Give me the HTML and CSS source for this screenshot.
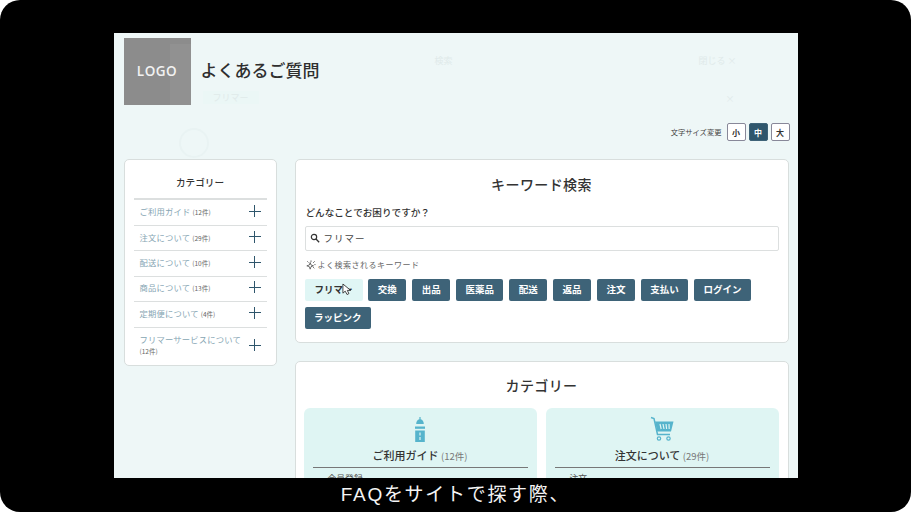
FILE: index.html
```html
<!DOCTYPE html>
<html lang="ja">
<head>
    <meta charset="UTF-8">
    <title>よくあるご質問</title>
    <link rel="stylesheet" href="styles.css">
</head>
<body>
    <div class="frame">
        <div class="screen">
            <div class="ghost">
                <span class="ghost__title">検索</span>
                <span class="ghost__close">閉じる ×</span>
                <span class="ghost__chip">フリマー</span>
                <span class="ghost__x">×</span>
                <span class="ghost__ring"></span>
            </div>

            <header class="header">
                <div class="logo">LOGO</div>
                <h1 class="header__title">よくあるご質問</h1>
            </header>

            <div class="size">
                <span class="size__label">文字サイズ変更</span>
                <button class="size__btn">小</button>
                <button class="size__btn size__btn--on">中</button>
                <button class="size__btn">大</button>
            </div>

            <div class="content">
                <aside class="side">
                    <h2 class="side__title">カテゴリー</h2>
                    <div class="side__item"><span>ご利用ガイド <small>(12件)</small></span><i class="plus"></i></div>
                    <div class="side__item"><span>注文について <small>(29件)</small></span><i class="plus"></i></div>
                    <div class="side__item"><span>配送について <small>(10件)</small></span><i class="plus"></i></div>
                    <div class="side__item"><span>商品について <small>(13件)</small></span><i class="plus"></i></div>
                    <div class="side__item"><span>定期便について <small>(4件)</small></span><i class="plus"></i></div>
                    <div class="side__item side__item--tall"><span>フリマーサービスについて <small>(12件)</small></span><i class="plus"></i></div>
                </aside>

                <main class="main">
                    <section class="card card--search">
                        <h2 class="card__title">キーワード検索</h2>
                        <p class="search__label">どんなことでお困りですか？</p>
                        <div class="search__input">
                            <svg class="search__icon" viewBox="0 0 12 12" width="10" height="10">
                                <circle cx="4.8" cy="4.8" r="3.2" fill="none" stroke="#333" stroke-width="1.4"/>
                                <path d="M7.2 7.2 11 11" stroke="#333" stroke-width="1.6"/>
                            </svg>
                            フリマー
                        </div>
                        <p class="search__hint">
                            <svg viewBox="0 0 12 12" width="10" height="10">
                                <path d="M5 3 6 6 9 7 6 8 5 11 4 8 1 7 4 6Z M1.5 1.5 3 3 M6 .5V2.500 M10.500 1.500 8.500 3.500 M11.500 5.500H10 M10 10 8.500 8.500" fill="none" stroke="#444" stroke-width=".9"/>
                            </svg>
                            よく検索されるキーワード
                        </p>
                        <div class="chips">
                            <span class="chip chip--on">フリマー
                                <svg class="cursor" viewBox="0 0 12 14" width="11" height="13">
                                    <path d="M1 1V11L3.500 8.800 5.500 12.500 7.500 11.500 5.800 8H9.500Z" fill="#fff" stroke="#222" stroke-width=".9"/>
                                </svg>
                            </span>
                            <span class="chip">交換</span>
                            <span class="chip">出品</span>
                            <span class="chip">医薬品</span>
                            <span class="chip">配送</span>
                            <span class="chip">返品</span>
                            <span class="chip">注文</span>
                            <span class="chip">支払い</span>
                            <span class="chip">ログイン</span>
                            <span class="chip">ラッピンク</span>
                        </div>
                    </section>

                    <section class="card card--cats">
                        <h2 class="card__title">カテゴリー</h2>
                        <div class="tiles">
                            <div class="tile">
                                <svg class="tile__icon" viewBox="0 0 24 28" width="24" height="28">
                                    <path d="M11.400 1h1.200v2.200c2.100.5 3.200 2.400 3.200 4.800H8.200c0-2.400 1.100-4.300 3.200-4.800Z" fill="#56b4cc"/>
                                    <path d="M7 10.500h10v2.300H7Z" fill="#56b4cc"/>
                                    <path d="M7.200 14.500h9.600v11.500H7.200Z" fill="#56b4cc"/>
                                    <path d="M11.400 16.500h1.200v3h-1.200ZM11.400 21h1.200v3h-1.200Z" fill="#dff5f3"/>
                                </svg>
                                <h3 class="tile__title">ご利用ガイド <small>(12件)</small></h3>
                                <p class="tile__row">会員登録</p>
                            </div>
                            <div class="tile">
                                <svg class="tile__icon" viewBox="0 0 24 26" width="24" height="26">
                                    <path d="M1 1.500 4 2.500 7.500 18.500H20" fill="none" stroke="#56b4cc" stroke-width="1.500"/>
                                    <path d="M5 5.500H23.500L21 15.500H7.200Z" fill="#56b4cc"/>
                                    <path d="M10 8 11.200 13M13 8 14 13M16 8 16.600 13M19 8 19.200 13" stroke="#dff5f3" stroke-width="1.200"/>
                                    <circle cx="9" cy="22.500" r="1.700" fill="none" stroke="#56b4cc" stroke-width="1.200"/>
                                    <circle cx="18.500" cy="22.500" r="1.700" fill="none" stroke="#56b4cc" stroke-width="1.200"/>
                                </svg>
                                <h3 class="tile__title tile__title--cart">注文について <small>(29件)</small></h3>
                                <p class="tile__row">注文</p>
                            </div>
                        </div>
                    </section>
                </main>
            </div>
        </div>
        <div class="caption">FAQをサイトで探す際、</div>
    </div>
</body>
</html>
```

FILE: styles.css
```css
:root {
    --navy: #3e6378;
    --line: #dcdfdf;
    --tile: #dff5f3;
    --jp: "Noto Sans CJK JP", "Noto Sans", sans-serif;
}

html,
body {
    height: 100%;
}

body {
    margin: 0;
    background: #fff;
    font-family: var(--jp);
    color: #333;
    overflow: hidden;
}

.frame {
    display: flex;
    flex-direction: column;
    align-items: center;
    width: 911px;
    height: 512px;
    padding-top: 33px;
    box-sizing: border-box;
    background: #000;
    border-radius: 20px;
}

.screen {
    position: relative;
    flex: none;
    width: 684px;
    height: 445px;
    overflow: hidden;
    background: #eef7f7;
}

/* faded modal from the video transition */
.ghost {
    position: absolute;
    inset: 0;
    color: #e0eaea;
    font-size: 9px;
}

.ghost span {
    position: absolute;
}

.ghost__title {
    left: 321px;
    top: 21px;
}

.ghost__close {
    left: 585px;
    top: 21px;
}

.ghost__chip {
    left: 89px;
    top: 58px;
    padding: 0 10px;
    background: #ebf7f6;
}

.ghost__x {
    left: 612px;
    top: 59px;
}

.ghost__ring {
    left: 65px;
    top: 95px;
    width: 26px;
    height: 26px;
    border: 2px solid #e9f3f3;
    border-radius: 50%;
}

.header {
    position: relative;
    display: flex;
    align-items: center;
    gap: 10px;
    padding: 5px 10px 0;
}

.logo {
    position: relative;
    width: 67px;
    height: 67px;
    line-height: 67px;
    text-align: center;
    background: #8c8c8c;
    color: #f2f2f2;
    font-family: "Open Sans", sans-serif;
    font-size: 13.500px;
    font-weight: 600;
    letter-spacing: .5px;
}

/* edge of the faded modal showing through the logo */
.logo::after {
    content: '';
    position: absolute;
    top: 6px;
    right: 0;
    bottom: 0;
    width: 21px;
    background: rgba(255, 255, 255, .05);
}

.header__title {
    margin: 0 0 4px;
    font-size: 17px;
    font-weight: 500;
    color: #2f2f2f;
}

.size {
    position: relative;
    display: flex;
    justify-content: flex-end;
    align-items: center;
    gap: 3px;
    margin-top: 18px;
    padding-right: 8px;
}

.size__label {
    margin-right: 2px;
    font-size: 7.300px;
    color: #444;
}

.size__btn {
    width: 19px;
    height: 18px;
    padding: 0;
    border: 1px solid #889;
    border-radius: 2px;
    background: #fff;
    color: #333;
    font-family: var(--jp);
    font-size: 8px;
    font-weight: 700;
}

.size__btn--on {
    border-color: var(--navy);
    background: #2f566c;
    color: #fff;
}

.content {
    position: relative;
    display: grid;
    grid-template-columns: 153px 494px;
    gap: 18px;
    align-items: start;
    margin-top: 18px;
    padding: 0 10px;
}

.side,
.card {
    background: #fff;
    border: 1px solid #d8dedd;
    border-radius: 5px;
    box-sizing: border-box;
}

.side {
    height: 207px;
    padding: 0 9px;
}

.side__title {
    height: 38px;
    margin: 0;
    line-height: 44px;
    text-align: center;
    font-size: 9.600px;
    font-weight: 500;
    color: #333;
}

.side__item {
    display: flex;
    align-items: center;
    justify-content: space-between;
    height: 25.400px;
    padding: 0 6px 3px;
    border-top: 1px solid var(--line);
    box-sizing: border-box;
    font-size: 8.300px;
    letter-spacing: .2px;
    color: #86a5b3;
}

.side__item:first-of-type {
    height: 27px;
    border-top-width: 2px;
}

.side__item--tall {
    height: 38px;
    padding-bottom: 2px;
    line-height: 12px;
}

.side__item--tall small {
    display: block;
}

.side__item small {
    font-size: 6.500px;
    letter-spacing: 0;
    color: #666;
}

.side__item span {
    width: 106px;
}

.plus {
    position: relative;
    flex: none;
    width: 12px;
    height: 12px;
    background:
        linear-gradient(#2f566c, #2f566c) center / 100% 1px no-repeat,
        linear-gradient(#2f566c, #2f566c) center / 1px 100% no-repeat;
}

.main {
    display: flex;
    flex-direction: column;
    gap: 18px;
}

.card--search {
    height: 184px;
    padding: 0 9px;
}

.card__title {
    margin: 0;
    padding-top: 14px;
    line-height: 21px;
    text-align: center;
    font-size: 14px;
    font-weight: 500;
    letter-spacing: .4px;
    color: #333;
}

.card--cats .card__title {
    padding-top: 13px;
}

.search__label {
    margin: 10px 0 0 1px;
    line-height: 14px;
    font-size: 9.600px;
    font-weight: 500;
    color: #333;
}

.search__input {
    display: flex;
    align-items: center;
    gap: 4px;
    height: 25px;
    margin-top: 7px;
    padding: 0 0 1px 4px;
    border: 1px solid var(--line);
    border-radius: 2px;
    box-sizing: border-box;
    font-size: 9.500px;
    letter-spacing: 1px;
    color: #444;
}

.search__hint {
    display: flex;
    align-items: center;
    gap: 2px;
    margin: 7px 0 0 1px;
    line-height: 13px;
    font-size: 8px;
    letter-spacing: .5px;
    color: #666;
}

.chips {
    display: flex;
    flex-wrap: wrap;
    gap: 6px 5.800px;
    margin-top: 8px;
}

.chip {
    position: relative;
    height: 22px;
    padding: 0 9.500px;
    line-height: 21px;
    border-radius: 2px;
    background: var(--navy);
    color: #fff;
    font-size: 9.500px;
    font-weight: 700;
}

.chip--on {
    padding: 0 10px;
    background: #e0f6f5;
    color: #333;
}

.cursor {
    position: absolute;
    left: 37px;
    top: 4px;
}

.card--cats {
    height: 200px;
    padding: 0 8px;
}

.tiles {
    display: grid;
    grid-template-columns: 233px 233px;
    gap: 9px;
    margin-top: 12px;
}

.tile {
    height: 120px;
    padding-top: 8px;
    border-radius: 6px;
    background: var(--tile);
    text-align: center;
    box-sizing: border-box;
}

.tile__icon {
    display: block;
    margin: 0 auto;
}

.tile__title {
    height: 24px;
    margin: 0 9px;
    padding-top: 2px;
    line-height: 18px;
    border-bottom: 1px solid #777;
    box-sizing: border-box;
    font-size: 11px;
    font-weight: 500;
    color: #333;
}

.tile__title--cart {
    height: 26px;
    padding-top: 4px;
}

.tile__title small {
    font-size: 9.500px;
    font-weight: 400;
    color: #777;
}

.tile__row {
    margin: 4px 24px;
    text-align: left;
    font-size: 8.800px;
    color: #555;
}

.caption {
    flex: 1;
    line-height: 33px;
    color: #f4f4f4;
    font-family: "Liberation Sans", "Noto Sans CJK JP", sans-serif;
    font-size: 19px;
    letter-spacing: 1.700px;
}
```
